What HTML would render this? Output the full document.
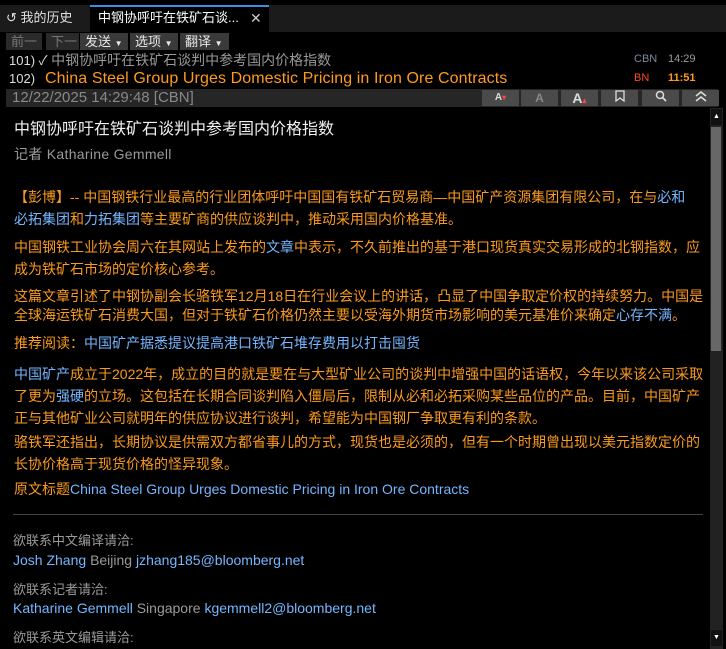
<!DOCTYPE html>
<html><head><meta charset="utf-8"><style>
*{margin:0;padding:0;box-sizing:border-box}
body{width:726px;height:649px;background:#000;overflow:hidden;position:relative;font-family:"Liberation Sans","Noto Sans CJK SC",sans-serif;font-size:14px;color:#f7931e}
.a{position:absolute;white-space:nowrap}
.o{color:#fb9a1e}.b{color:#74b6ff}.g{color:#9a9a9a}.w{color:#f0f0f0}
.btn{position:absolute;top:33px;height:17px;background:#3a3a3a;color:#e8e8e8;font-size:13px;line-height:17px;padding-left:5px}
.btn.d{color:#777;background:#2a2a2a}
.tb{position:absolute;top:90px;height:16px;width:37px;background:#4a4a4a;color:#ddd;text-align:center;font-size:12px;line-height:16px;font-weight:bold}
</style></head><body>
<div class="a" style="left:0;top:5px;width:726px;height:27px;background:#1b1b1b"></div>
<div class="a" style="left:6px;top:8px;font-size:13px;color:#e0e0e0;line-height:20px">&#x21BA; 我的历史</div>
<div class="a" style="left:90px;top:5px;width:179px;height:27px;background:#000;border-top:2px solid #3b8fe6"></div>
<div class="a" style="left:98px;top:8px;font-size:13px;color:#fff;line-height:20px">中钢协呼吁在铁矿石谈...</div>
<div class="a" style="left:250px;top:8px;font-size:14px;color:#ccc;line-height:20px">✕</div>

<div class="btn d" style="left:6px;width:36px">前一</div>
<div class="btn d" style="left:46px;width:33px">下一</div>
<div class="btn" style="left:80px;width:48px">发送 <span style="font-size:8px">▼</span></div>
<div class="btn" style="left:130px;width:48px">选项 <span style="font-size:8px">▼</span></div>
<div class="btn" style="left:180px;width:49px">翻译 <span style="font-size:8px">▼</span></div>

<div class="a" style="left:9px;top:51px;font-size:13px;color:#ddd;line-height:18px">101) ✓ <span style="color:#999;font-size:14px">中钢协呼吁在铁矿石谈判中参考国内价格指数</span></div>
<div class="a" style="left:634px;top:53px;font-size:11px;color:#7c8a99">CBN</div>
<div class="a" style="left:668px;top:53px;font-size:11px;color:#999">14:29</div>
<div class="a" style="left:9px;top:70px;font-size:13px;color:#ddd;line-height:18px">102)</div>
<div class="a" style="left:45px;top:69px;font-size:16px;color:#ff9a1e;line-height:19px;letter-spacing:0.1px">China Steel Group Urges Domestic Pricing in Iron Ore Contracts</div>
<div class="a" style="left:634px;top:72px;font-size:11px;color:#ff4a1e">BN</div>
<div class="a" style="left:668px;top:72px;font-size:11px;color:#ff9a1e;font-weight:bold">11:51</div>

<div class="a" style="left:6px;top:89px;width:712px;height:18px;background:#262626"></div>
<div class="a" style="left:12px;top:89px;font-size:15px;color:#888;line-height:18px">12/22/2025 14:29:48 [CBN]</div>
<div class="tb" style="left:482px;font-size:10px">A<span style="color:#f44;font-size:8px">▾</span></div>
<div class="tb" style="left:521px;color:#888">A</div>
<div class="tb" style="left:561px;font-size:14px">A<span style="color:#f44;font-size:8px">▴</span></div>
<div class="tb" style="left:601px"><svg width="10" height="12" viewBox="0 0 10 12"><path d="M1 1h8v10L5 8 1 11z" fill="none" stroke="#ddd" stroke-width="1.3"/></svg></div>
<div class="tb" style="left:642px"><svg width="12" height="12" viewBox="0 0 12 12"><circle cx="5" cy="5" r="3.5" fill="none" stroke="#ddd" stroke-width="1.5"/><path d="M7.5 7.5l3.5 3.5" stroke="#ddd" stroke-width="1.8"/></svg></div>
<div class="tb" style="left:682px"><svg width="12" height="12" viewBox="0 0 12 12"><path d="M1 6l5-4 5 4M1 11l5-4 5 4" fill="none" stroke="#ddd" stroke-width="1.6"/></svg></div>

<div class="a" style="left:710px;top:108px;width:13px;height:541px;background:#222"></div>
<div class="a" style="left:711px;top:109px;width:11px;height:16px;background:#111;color:#fff;font-size:7px;text-align:center;line-height:16px">▲</div>
<div class="a" style="left:711px;top:127px;width:10px;height:224px;background:#676767"></div>
<div class="a" style="left:711px;top:630px;width:11px;height:16px;background:#111;color:#fff;font-size:7px;text-align:center;line-height:16px">▼</div>

<div class="a w" style="left:14px;top:118px;font-size:16px;line-height:24px">中钢协呼吁在铁矿石谈判中参考国内价格指数</div>
<div class="a g" style="left:14px;top:144px;font-size:14px;line-height:20px;letter-spacing:0.3px">记者 Katharine Gemmell</div>

<div class="a o" style="left:14px;top:186px;line-height:22px">【彭博】-- 中国钢铁行业最高的行业团体呼吁中国国有铁矿石贸易商—中国矿产资源集团有限公司，在与<span class="b">必和</span></div>
<div class="a o" style="left:14px;top:208px;line-height:22px"><span class="b">必拓集团</span>和<span class="b">力拓集团</span>等主要矿商的供应谈判中，推动采用国内价格基准。</div>
<div class="a o" style="left:14px;top:236px;line-height:22px">中国钢铁工业协会周六在其网站上发布的<span class="b">文章</span>中表示，不久前推出的基于港口现货真实交易形成的北钢指数，应</div>
<div class="a o" style="left:14px;top:258px;line-height:22px">成为铁矿石市场的定价核心参考。</div>
<div class="a o" style="left:14px;top:285px;line-height:22px">这篇文章引述了中钢协副会长骆铁军12月18日在行业会议上的讲话，凸显了中国争取定价权的持续努力。中国是</div>
<div class="a o" style="left:14px;top:304px;line-height:22px">全球海运铁矿石消费大国，但对于铁矿石价格仍然主要以受海外期货市场影响的美元基准价来确定<span class="b">心存不满</span>。</div>
<div class="a o" style="left:14px;top:332px;line-height:22px">推荐阅读：<span class="b">中国矿产据悉提议提高港口铁矿石堆存费用以打击囤货</span></div>
<div class="a o" style="left:14px;top:363px;line-height:22px"><span class="b">中国矿产</span>成立于2022年，成立的目的就是要在与大型矿业公司的谈判中增强中国的话语权，今年以来该公司采取</div>
<div class="a o" style="left:14px;top:385px;line-height:22px">了更为<span class="b">强硬</span>的立场。这包括在长期合同谈判陷入僵局后，限制从必和必拓采购某些品位的产品。目前，中国矿产</div>
<div class="a o" style="left:14px;top:407px;line-height:22px">正与其他矿业公司就明年的供应协议进行谈判，希望能为中国钢厂争取更有利的条款。</div>
<div class="a o" style="left:14px;top:431px;line-height:22px">骆铁军还指出，长期协议是供需双方都省事儿的方式，现货也是必须的，但有一个时期曾出现以美元指数定价的</div>
<div class="a o" style="left:14px;top:453px;line-height:22px">长协价格高于现货价格的怪异现象。</div>
<div class="a o" style="left:14px;top:478px;line-height:22px">原文标题<span class="b">China Steel Group Urges Domestic Pricing in Iron Ore Contracts</span></div>

<div class="a" style="left:13px;top:514px;width:690px;height:1px;background:#444"></div>
<div class="a g" style="left:13px;top:531px;font-size:13px;line-height:20px">欲联系中文编译请洽:</div>
<div class="a" style="left:13px;top:550px;line-height:20px"><span class="b">Josh Zhang</span> <span class="g">Beijing</span> <span class="b">jzhang185@bloomberg.net</span></div>
<div class="a g" style="left:13px;top:580px;font-size:13px;line-height:20px">欲联系记者请洽:</div>
<div class="a" style="left:13px;top:598px;line-height:20px"><span class="b">Katharine Gemmell</span> <span class="g">Singapore</span> <span class="b">kgemmell2@bloomberg.net</span></div>
<div class="a g" style="left:13px;top:628px;font-size:13px;line-height:20px">欲联系英文编辑请洽:</div>
</body></html>
